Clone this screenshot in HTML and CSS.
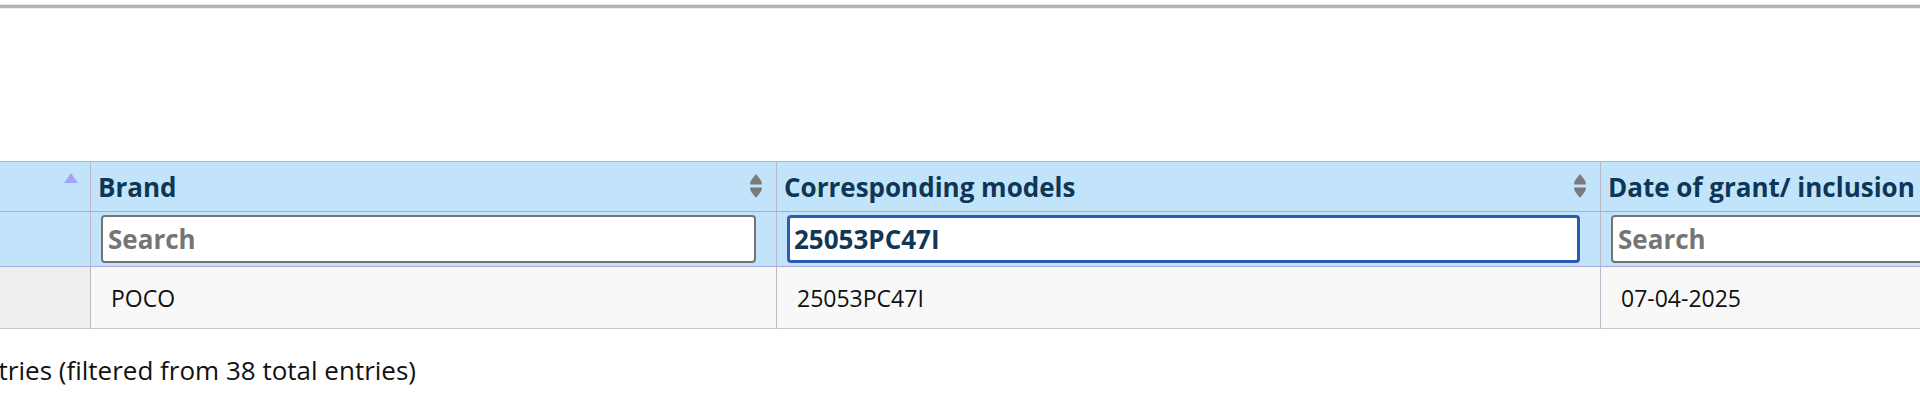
FILE: index.html
```html
<!DOCTYPE html>
<html>
    <head>
        <title>Filtered Models</title>
        <link rel="stylesheet" href="styles.css">
    </head>
    <body>
        <div class="rule"></div>
        <div class="wrap">
            <table class="grid">
                <colgroup>
                    <col class="c-idx">
                    <col class="c-brand">
                    <col class="c-models">
                    <col class="c-date">
                </colgroup>
                <tr class="head">
                    <th>
                        <svg class="asc" width="14" height="10" viewBox="0 0 14 10"><polygon points="7,0 14,10 0,10" fill="#a3a3f5"/></svg>
                    </th>
                    <th>Brand
                        <svg class="both" width="12" height="24" viewBox="0 0 12 24"><path d="M6 0 C8 3 12 6 12 10.5 L0 10.5 C0 6 4 3 6 0 Z M0 13.5 L12 13.5 C12 18 8 21 6 24 C4 21 0 18 0 13.5 Z" fill="#7a7a7a"/></svg>
                    </th>
                    <th>Corresponding models
                        <svg class="both" width="12" height="24" viewBox="0 0 12 24"><path d="M6 0 C8 3 12 6 12 10.5 L0 10.5 C0 6 4 3 6 0 Z M0 13.5 L12 13.5 C12 18 8 21 6 24 C4 21 0 18 0 13.5 Z" fill="#7a7a7a"/></svg>
                    </th>
                    <th>Date of grant/ inclusion</th>
                </tr>
                <tr class="filters">
                    <th></th>
                    <th><input type="text" placeholder="Search"></th>
                    <th><input type="text" class="active" value="25053PC47I"></th>
                    <th><input type="text" placeholder="Search"></th>
                </tr>
                <tr class="row">
                    <td class="idx"></td>
                    <td>POCO</td>
                    <td>25053PC47I</td>
                    <td>07-04-2025</td>
                </tr>
            </table>
            <div class="info">Showing 1 to 1 of 1 entries (filtered from 38 total entries)</div>
        </div>
    </body>
</html>
```

FILE: styles.css
```css
html, body {
    overflow: hidden;
}
body {
    margin: 0;
    background: #fff;
    font-family: "Open Sans", Arial, sans-serif;
    color: #111;
}
.rule {
    margin-top: 4px;
    height: 3px;
    background: #b3b3b3;
    border-top: 1px solid #e4e4e4;
    border-bottom: 1px solid #ececec;
}
.wrap {
    margin-top: 152px;
    margin-left: -40px;
    width: 2100px;
}
.grid {
    border-collapse: collapse;
    table-layout: fixed;
    width: 2100px;
    border-top: 1px solid #b4b4b4;
    border-bottom: 1px solid #c8c8c8;
}
.c-idx { width: 130px; }
.c-brand { width: 686px; }
.c-models { width: 824px; }
.c-date { width: 460px; }
.grid th, .grid td {
    border-left: 1px solid #b8b8c8;
    text-align: left;
    white-space: nowrap;
}
.head th {
    background: #c1e4fa;
    color: #0e3656;
    font-size: 26px;
    font-weight: 700;
    height: 49px;
    padding: 0 7px;
    position: relative;
    border-bottom: 1px solid #a9a9dc;
}
.asc {
    position: absolute;
    right: 12px;
    top: 11px;
}
.both {
    position: absolute;
    right: 14px;
    top: 12px;
}
.filters th {
    background: #c1e4fa;
    height: 54px;
    padding: 0 20px 0 10px;
    border-bottom: 1px solid #a9a9dc;
}
.filters input {
    box-sizing: border-box;
    width: 100%;
    height: 48px;
    border: 2px solid #747474;
    border-radius: 4px;
    padding: 0 5px;
    font-family: "Open Sans", Arial, sans-serif;
    font-size: 26px;
    font-weight: 700;
    color: #123656;
    background: #fff;
}
.filters input::placeholder {
    color: #757575;
}
.filters input.active {
    border: 3px solid #2b5cb3;
    padding: 0 4px;
}
.row td {
    background: #f8f8f8;
    height: 61px;
    padding: 0 20px;
    font-size: 23px;
}
.row td.idx {
    background: #eeeeee;
}
.info {
    margin-top: 23px;
    font-size: 26px;
    margin-left: -229px;
}
```
